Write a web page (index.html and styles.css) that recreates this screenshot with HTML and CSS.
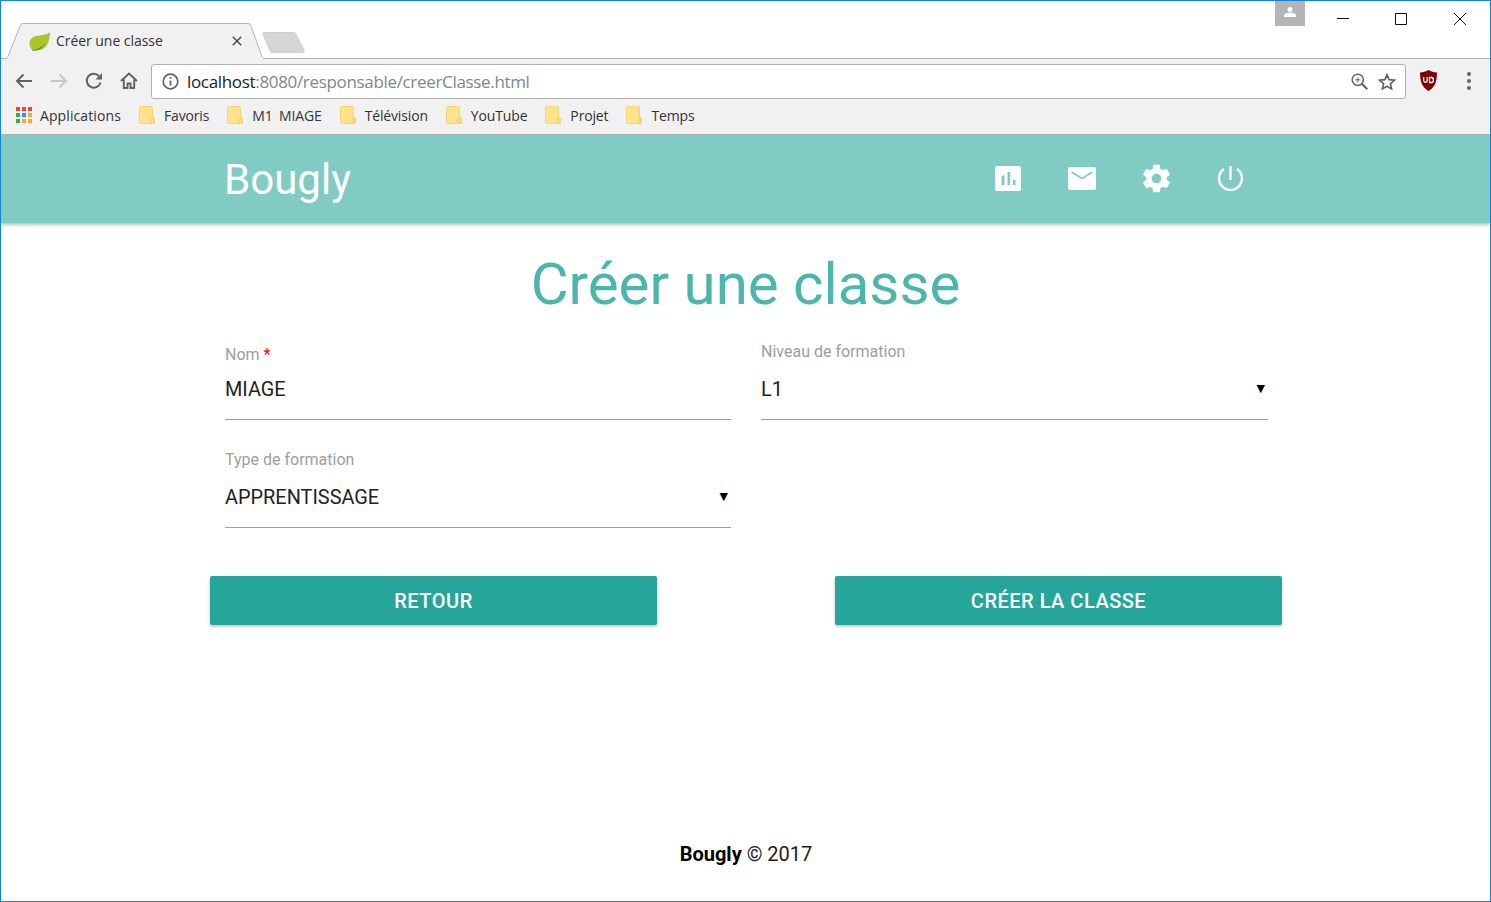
FILE: index.html
```html
<!DOCTYPE html>
<html>
    <head>
        <meta charset="utf-8">
        <title>Créer une classe</title>
        <link rel="stylesheet" href="styles.css">
    </head>
    <body>
        <div class="window">
            <div class="titlebar">
                <div class="tab">
                    <svg class="tab-shape" width="268" height="36" viewBox="0 0 268 36"><path d="M0 35.500H4C5.500 35.500 6.500 35 7 33.500L19 3C19.700 1.300 20.500.5 22 .5H247C248.500.5 249.300 1.300 250 3L261 33.500C261.500 35 262.500 35.500 264 35.500H266V36H0z" fill="#f1f1f1"/><path d="M0 35.500H4C5.500 35.500 6.500 35 7 33.500L19 3C19.700 1.300 20.500.5 22 .5H247C248.500.5 249.300 1.300 250 3L261 33.500C261.500 35 262.500 35.500 264 35.500H266" fill="none" stroke="#b4b4b4" stroke-width="1"/></svg>
                    <svg class="favicon" width="21" height="19" viewBox="0 0 21 19"><path d="M21 0C19 3 12 3 7 4 3 5 0 8 .5 12c.3 3 1.500 5.500 3.500 6.500 5 .5 11-.5 14-5.500 2-3.500 3-8 3-13z" fill="#a8c530"/><path d="M3 18c5-.5 9-2 13-7-2 5-6 7.500-12 7.700z" fill="#4f8f35"/></svg>
                    <span class="tab-title">Créer une classe</span>
                    <svg class="tab-close" width="10" height="10" viewBox="0 0 10 10"><path d="M.8.800l8.400 8.400M9.200.800L.8 9.200" stroke="#444" stroke-width="1.400" fill="none"/></svg>
                </div>
                <svg class="new-tab" width="44" height="21" viewBox="0 0 44 21"><path d="M2 .5h30c1 0 1.500.5 2 1.500l8 16c.5 1.500 0 2.500-1.500 2.500H10c-1 0-1.500-.5-2-1.500L.8 2C.4 1 1 .5 2 .5z" fill="#d6d6d6" stroke="#cfcfcf"/></svg>
                <div class="profile"><svg width="12" height="10" viewBox="0 0 12 10"><circle cx="6" cy="2.500" r="2.500" fill="#fff"/><path d="M0 10V8.500C0 6.500 3.500 5.800 6 5.800s6 .7 6 2.700V10z" fill="#fff"/></svg></div>
                <div class="win-controls">
                    <svg width="12" height="12" viewBox="0 0 12 12"><path d="M0 5.500h12" stroke="#111" fill="none"/></svg>
                    <svg width="12" height="12" viewBox="0 0 12 12"><path d="M.5.500h11v11H.5z" stroke="#111" fill="none"/></svg>
                    <svg width="12" height="12" viewBox="0 0 12 12"><path d="M0 0l12 12M12 0L0 12" stroke="#111" fill="none"/></svg>
                </div>
            </div>

            <div class="toolbar">
                <svg class="tool" width="18" height="16" viewBox="0 0 18 16"><path d="M17 8H2M8.500 1.500L2 8l6.500 6.500" stroke="#5f6368" stroke-width="2" fill="none"/></svg>
                <svg class="tool" width="18" height="16" viewBox="0 0 18 16"><path d="M1 8h15M9.500 1.500L16 8l-6.500 6.500" stroke="#c6c6c6" stroke-width="2" fill="none"/></svg>
                <svg class="tool" width="18" height="18" viewBox="0 0 18 18"><path d="M15.500 10.500A7 7 0 1 1 14 4" stroke="#5f6368" stroke-width="2" fill="none"/><path d="M17 1v6.500h-6.500z" fill="#5f6368"/></svg>
                <svg class="tool" width="18" height="17" viewBox="0 0 18 17"><path d="M1 9l8-7.500L17 9M3.800 7.500V16h3.700v-4.500h3V16h3.700V7.500" stroke="#5f6368" stroke-width="1.900" fill="none"/></svg>
                <div class="omnibox">
                    <svg class="info" width="17" height="17" viewBox="0 0 17 17"><circle cx="8.500" cy="8.500" r="7.300" stroke="#5f6368" stroke-width="1.700" fill="none"/><path d="M8.500 7.500v5" stroke="#5f6368" stroke-width="1.800"/><circle cx="8.500" cy="5" r="1.100" fill="#5f6368"/></svg>
                    <span class="url"><span class="host">localhost</span>:8080/responsable/creerClasse.html</span>
                    <svg class="zoom-icon" width="17" height="17" viewBox="0 0 17 17"><circle cx="6.800" cy="6.800" r="5.600" stroke="#5f6368" stroke-width="1.500" fill="none"/><path d="M11 11l5.300 5.300" stroke="#5f6368" stroke-width="2" fill="none"/><path d="M4.300 6.800h5M6.800 4.300v5" stroke="#5f6368" fill="none"/></svg>
                    <svg class="star" width="18" height="17" viewBox="0 0 18 17"><path d="M9 1.800l2.100 4.900 5.300.5-4 3.500 1.200 5.200L9 13.200l-4.600 2.700 1.200-5.200-4-3.500 5.300-.5z" stroke="#5f6368" stroke-width="1.700" fill="none"/></svg>
                </div>
                <svg class="ublock" width="17" height="21" viewBox="0 0 17 21"><path d="M8.500 0c2.800 1.500 5 2.200 8.500 2.500C17 11 15 17.500 8.500 21 2 17.500 0 11 0 2.500 3.500 2.200 5.700 1.500 8.500 0z" fill="#800000"/><path d="M3.700 7v3.500c0 2.300 3.500 2.300 3.500 0V7M9.500 7.500h2c2.600 0 2.600 5 0 5h-2z" stroke="#fff" stroke-width="1.300" fill="none"/></svg>
                <div class="menu-dots"><span></span><span></span><span></span></div>
            </div>

            <div class="bookmarks">
                <div class="bookmark apps-mark">
                    <div class="apps-grid"><i class="r"></i><i class="r"></i><i class="r"></i><i class="g"></i><i class="b"></i><i class="y"></i><i class="g"></i><i class="y"></i><i class="y"></i></div>
                    <span>Applications</span>
                </div>
                <div class="bookmark"><svg class="folder" width="16" height="18" viewBox="0 0 16 18"><use href="#folder-shape"/></svg><span>Favoris</span></div>
                <div class="bookmark"><svg class="folder" width="16" height="18" viewBox="0 0 16 18"><use href="#folder-shape"/></svg><span>M1 MIAGE</span></div>
                <div class="bookmark"><svg class="folder" width="16" height="18" viewBox="0 0 16 18"><use href="#folder-shape"/></svg><span>Télévision</span></div>
                <div class="bookmark"><svg class="folder" width="16" height="18" viewBox="0 0 16 18"><use href="#folder-shape"/></svg><span>YouTube</span></div>
                <div class="bookmark"><svg class="folder" width="16" height="18" viewBox="0 0 16 18"><use href="#folder-shape"/></svg><span>Projet</span></div>
                <div class="bookmark"><svg class="folder" width="16" height="18" viewBox="0 0 16 18"><use href="#folder-shape"/></svg><span>Temps</span></div>
            </div>

            <svg class="defs" width="0" height="0"><defs><g id="folder-shape"><path d="M1.500.5h10.500c1 0 1.500.5 1.500 1.500v10H15.500v4c0 1-.5 1.500-1.500 1.500H1.500c-.6 0-1-.4-1-1V1.500c0-.6.4-1 1-1z" fill="#fee38c" stroke="#f5d470"/><path d="M12 13h3v4h-3z" fill="#fee38c" stroke="#eec95c" stroke-width=".8"/></g></defs></svg>

            <nav class="navbar">
                <a class="brand">Bougly</a>
                <div class="nav-icons">
                    <span class="nav-icon"><svg width="26" height="25" viewBox="0 0 26 25"><path fill-rule="evenodd" d="M2 0h22c1 0 2 1 2 2v21c0 1-1 2-2 2H2c-1 0-2-1-2-2V2C0 1 1 0 2 0zm4.500 9.500V19h3V9.500zm6-3.500v13h2.700V6zm5.500 8v5h2.500v-5z" fill="#fff"/></svg></span>
                    <span class="nav-icon"><svg width="28" height="23" viewBox="0 0 28 23"><rect width="28" height="23" rx="2" fill="#fff"/><path d="M3.500 5l10.500 6.500L24.500 5" stroke="#80cbc4" stroke-width="1.800" fill="none"/></svg></span>
                    <span class="nav-icon"><svg width="33" height="33" viewBox="0 0 24 24"><path fill="#fff" d="M19.430 12.980c.04-.32.07-.64.07-.98s-.03-.66-.07-.98l2.110-1.650c.19-.15.24-.42.12-.64l-2-3.460c-.12-.22-.39-.3-.61-.22l-2.490 1c-.52-.4-1.080-.73-1.690-.98l-.38-2.650C14.460 2.180 14.250 2 14 2h-4c-.25 0-.46.18-.49.42l-.38 2.650c-.61.25-1.170.59-1.690.98l-2.490-1c-.23-.09-.49 0-.61.22l-2 3.460c-.13.22-.07.49.12.64l2.110 1.650c-.04.32-.07.65-.07.98s.03.66.07.98l-2.110 1.650c-.19.15-.24.42-.12.64l2 3.460c.12.22.39.3.61.22l2.490-1c.52.4 1.080.73 1.690.98l.38 2.650c.03.24.24.42.49.42h4c.25 0 .46-.18.49-.42l.38-2.650c.61-.25 1.170-.59 1.690-.98l2.490 1c.23.09.49 0 .61-.22l2-3.460c.12-.22.07-.49-.12-.64l-2.110-1.650zM12 15.500c-1.930 0-3.500-1.570-3.500-3.500s1.570-3.500 3.500-3.500 3.500 1.570 3.500 3.500-1.570 3.500-3.500 3.500z"/></svg></span>
                    <span class="nav-icon"><svg width="25" height="25" viewBox="0 0 25 25"><path d="M12.500 0v14M6 3A11.500 11.500 0 1 0 19 3" stroke="#fff" stroke-width="2.400" fill="none"/></svg></span>
                </div>
            </nav>

            <main class="page">
                <h1 class="page-title">Créer une classe</h1>
                <form class="form-grid">
                    <div class="field field-nom">
                        <label>Nom <span class="req">*</span></label>
                        <div class="value">MIAGE</div>
                    </div>
                    <div class="field">
                        <label>Niveau de formation</label>
                        <div class="value">L1<span class="caret">▼</span></div>
                    </div>
                    <div class="field">
                        <label>Type de formation</label>
                        <div class="value">APPRENTISSAGE<span class="caret">▼</span></div>
                    </div>
                </form>
                <div class="actions">
                    <a class="btn">RETOUR</a>
                    <a class="btn">CRÉER LA CLASSE</a>
                </div>
            </main>

            <footer class="footer"><b>Bougly</b> © 2017</footer>
        </div>
    </body>
</html>
```

FILE: styles.css
```css
html, body {
    margin: 0;
    padding: 0;
}

.window {
    width: 1491px;
    height: 902px;
    box-sizing: border-box;
    border: 1px solid #1883d7;
    overflow: hidden;
    background: #fff;
    display: flex;
    flex-direction: column;
    font-family: Roboto, sans-serif;
}

.defs {
    position: absolute;
}

/* browser chrome */
.titlebar {
    height: 57px;
    flex: none;
    display: flex;
    align-items: flex-start;
    border-bottom: 1px solid #b2b2b2;
    box-sizing: content-box;
}

.tab {
    position: relative;
    width: 262px;
    height: 36px;
    margin-top: 22px;
    display: flex;
    align-items: center;
    padding-left: 28px;
    box-sizing: border-box;
    z-index: 1;
    flex: none;
}

.tab-shape {
    position: absolute;
    left: 0;
    top: 0;
}

.favicon {
    position: relative;
    flex: none;
}

.tab-title {
    position: relative;
    top: -1px;
    margin-left: 6px;
    width: 176px;
    font: 14px "Open Sans", sans-serif;
    letter-spacing: -.05px;
    color: #333;
    white-space: nowrap;
}

.tab-close {
    position: relative;
    flex: none;
}

.new-tab {
    margin: 31px 0 0 -1px;
    flex: none;
}

.profile {
    width: 30px;
    height: 25px;
    margin-left: 969px;
    background: #b5b5b5;
    display: flex;
    align-items: center;
    justify-content: center;
    padding-bottom: 4px;
    box-sizing: border-box;
    flex: none;
}

.win-controls {
    display: grid;
    grid-template-columns: 58px 59px 12px;
    margin: 12px 0 0 32px;
}

.toolbar {
    height: 42px;
    flex: none;
    display: flex;
    align-items: center;
    background: #f1f1f1;
    padding: 1px 0 0 14px;
    box-sizing: border-box;
}

.tool {
    flex: none;
    margin-right: 17px;
}

.omnibox {
    width: 1255px;
    height: 35px;
    margin: 2px 0 0 -4px;
    box-sizing: border-box;
    background: #fff;
    border: 1px solid #b0b0b0;
    border-radius: 3px;
    display: flex;
    align-items: center;
    padding: 0 9px 0 10px;
    flex: none;
}

.url {
    flex: 1;
    margin-left: 8px;
    font: 17px "Open Sans", sans-serif;
    letter-spacing: -.33px;
    color: #80868b;
    white-space: nowrap;
}

.host {
    color: #222;
}

.star {
    margin-left: 10px;
}

.ublock {
    margin-left: 14px;
    flex: none;
}

.menu-dots {
    margin-left: 30px;
    display: flex;
    flex-direction: column;
    gap: 3px;
}

.menu-dots span {
    width: 4px;
    height: 4px;
    border-radius: 50%;
    background: #5f6368;
}

.bookmarks {
    height: 34px;
    flex: none;
    display: flex;
    align-items: center;
    gap: 18px;
    padding: 0 0 5px 15px;
    box-sizing: border-box;
    background: #f1f1f1;
    border-bottom: 1px solid #b2b2b2;
    font: 14px "Open Sans", sans-serif;
    letter-spacing: -.15px;
    word-spacing: 3px;
    color: #333;
}

.bookmark {
    display: flex;
    align-items: center;
    gap: 9px;
}

.apps-mark {
    gap: 7px;
    letter-spacing: .1px;
}

.apps-grid {
    width: 17px;
    height: 17px;
    display: grid;
    grid-template-columns: repeat(3, 4px);
    grid-auto-rows: 4px;
    gap: 2px;
}

.apps-grid .r { background: #e8453c; }
.apps-grid .g { background: #3aa757; }
.apps-grid .b { background: #4285f4; }
.apps-grid .y { background: #f9a825; }

/* page */
.navbar {
    height: 88px;
    flex: none;
    background: #80cbc4;
    box-shadow: 0 2px 3px rgba(0, 0, 0, .25);
    display: flex;
    align-items: center;
    padding-left: 223px;
    position: relative;
}

.brand {
    font-size: 42px;
    color: #fff;
    width: 747px;
    letter-spacing: .03px;
}

.nav-icons {
    display: grid;
    grid-template-columns: repeat(4, 74px);
    margin-top: -2px;
}

.nav-icon {
    display: flex;
    align-items: center;
    justify-content: center;
}

.page {
    flex: 1;
    display: flex;
    flex-direction: column;
}

.page-title {
    margin: 28px 0 0;
    font-size: 58.200px;
    font-weight: 400;
    line-height: 66px;
    text-align: center;
    color: #4db6ac;
}

.form-grid {
    margin: 25px 0 0 224px;
    width: 1043px;
    display: grid;
    grid-template-columns: 506px 507px;
    column-gap: 30px;
    row-gap: 30px;
}

.field label {
    display: block;
    font-size: 16px;
    line-height: 19px;
    color: #9e9e9e;
}

.req {
    color: #f00;
}

.field-nom label {
    position: relative;
    top: 3px;
}

.value {
    height: 48px;
    margin-top: 10px;
    border-bottom: 1px solid #9e9e9e;
    font-size: 19.900px;
    line-height: 38px;
    color: #212121;
    display: flex;
    justify-content: space-between;
}

.caret {
    font-size: 11px;
    color: #000;
    padding-right: 3px;
    margin-top: -1px;
    font-family: "DejaVu Sans", sans-serif;
}

.actions {
    margin: 48px 0 0 209px;
    display: flex;
    gap: 178px;
}

.btn {
    width: 447px;
    height: 49px;
    background: #26a69a;
    border-radius: 2px;
    box-shadow: 0 2px 2px rgba(0, 0, 0, .14), 0 1px 5px rgba(0, 0, 0, .12);
    color: #fff;
    font-size: 20px;
    font-weight: 500;
    letter-spacing: .5px;
    line-height: 50px;
    text-align: center;
}

.footer {
    flex: none;
    height: 59px;
    padding-left: 1px;
    text-align: center;
    font-size: 20px;
    line-height: 24px;
    color: #212121;
}

.footer b {
    color: #000;
}
```
